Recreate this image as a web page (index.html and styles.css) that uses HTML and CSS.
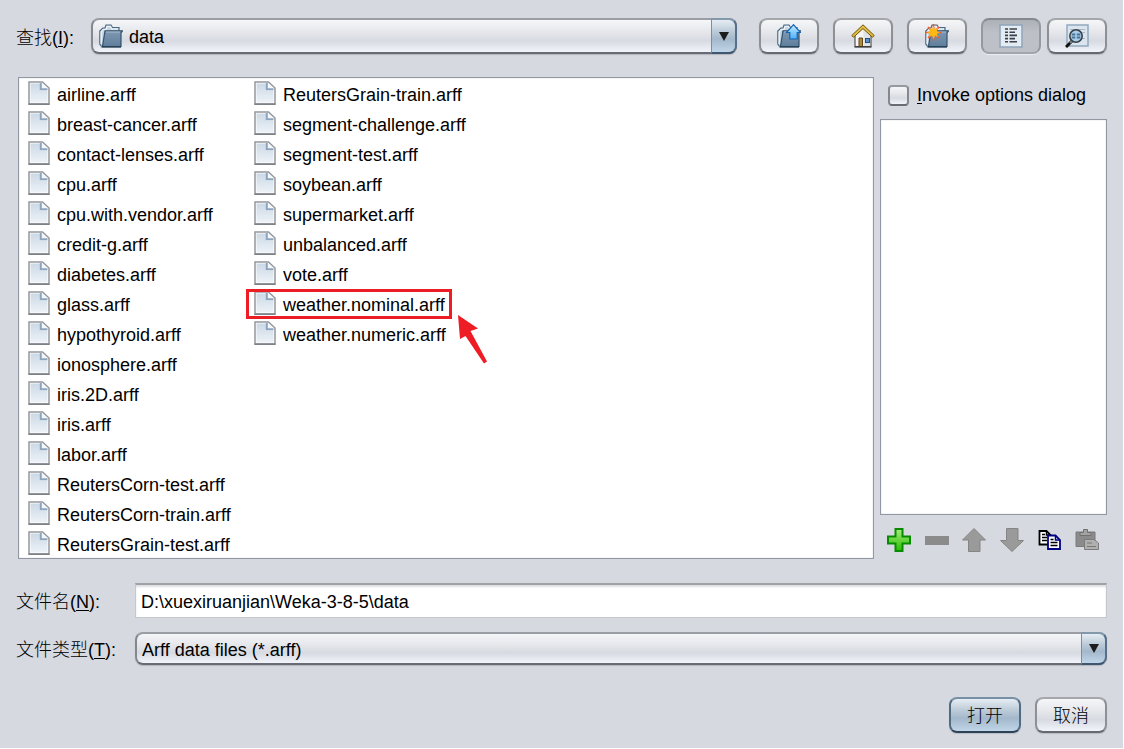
FILE: index.html
```html
<!DOCTYPE html>
<html lang="zh-CN">
<head>
    <meta charset="UTF-8">
    <meta name="viewport" content="width=device-width, initial-scale=1.0">
    <title>打开</title>
    <link rel="stylesheet" href="styles.css">
</head>
<body>
    <!-- Shared icon shapes -->
    <svg class="defs" aria-hidden="true">
        <defs>
            <linearGradient id="paper" x1="0" y1="0" x2="0" y2="1">
                <stop offset="0" stop-color="#ccd9e6"/>
                <stop offset="1" stop-color="#edf2f7"/>
            </linearGradient>
            <linearGradient id="folderFront" x1="0" y1="0" x2="0" y2="1">
                <stop offset="0" stop-color="#7f98b1"/>
                <stop offset="1" stop-color="#5f7e9c"/>
            </linearGradient>
            <linearGradient id="sky" x1="0" y1="0" x2="0" y2="1">
                <stop offset="0" stop-color="#c4eaff"/>
                <stop offset="1" stop-color="#4db0f5"/>
            </linearGradient>
            <linearGradient id="green" x1="0" y1="0" x2="0" y2="1">
                <stop offset="0" stop-color="#a8ec7c"/>
                <stop offset="1" stop-color="#27bd00"/>
            </linearGradient>
        </defs>
        <symbol id="file" viewBox="0 0 22 24">
            <path d="M1 1h13.500l6.500 6v16H1z" fill="#fff" stroke="#94979c" stroke-width="1.500"/>
            <path d="M2.500 2.500h9.500v7h7.500v12h-17z" fill="url(#paper)"/>
            <path d="M12.800 2v6.200h6.700" fill="none" stroke="#8ca4bd" stroke-width="2"/>
            <path d="M14 2l5.500 5H14z" fill="#f4f7fa"/>
            <path d="M.500 23.200h21" stroke="#7b7e82" stroke-width="1.500"/>
        </symbol>
        <symbol id="folder" viewBox="0 0 24 24">
            <path d="M2.500 22.500L.800 20V7l3-3H6l1-3h5l1.500 2.500H20V8" fill="#c9d6e1" stroke="#4b6985" stroke-width="1.200"/>
            <path d="M2.200 20V8l2-2.500H7L8 2.500h3.500L13 5h6" fill="none" stroke="#eff4f8" stroke-width="1.200"/>
            <path d="M6 6.800h17.500L22 9v13.500H3.500z" fill="url(#folderFront)" stroke="#34526e" stroke-width="1.200"/>
            <path d="M7 8h14" stroke="#a9bccd" stroke-width="1"/>
            <path d="M2.500 23h19.500" stroke="#1f394f" stroke-width="1.300"/>
        </symbol>
    </svg>

    <header class="toolbar">
        <label class="field-label" for="lookIn">查找(<u>I</u>):</label>
        <div class="combo combo-folder">
            <svg class="combo-icon" width="24" height="24"><use href="#folder"/></svg>
            <select id="lookIn">
                <option>data</option>
            </select>
            <span class="combo-arrow"></span>
        </div>
        <div class="tools">
            <button type="button" class="btn tool-btn" aria-label="Up one level">
                <svg width="24" height="24" viewBox="0 0 24 24">
                    <use href="#folder"/>
                    <path d="M16.500 .700l7 7.800h-3.300v6.500h-7.400V8.500H9.500z" fill="url(#sky)" stroke="#1266b8" stroke-width="1.200"/>
                </svg>
            </button>
            <button type="button" class="btn tool-btn" aria-label="Home">
                <svg width="24" height="24" viewBox="0 0 24 24">
                    <path d="M4 11l8-8 8 8v11.500H4z" fill="#f5f5f5" stroke="#555" stroke-width="1.200"/>
                    <path d="M12 4l7 7v11h-6z" fill="#dfe2e6"/>
                    <path d="M.800 11.500L12 .800l11.200 10.700-1.700 1.800L12 4.600l-9.500 8.700z" fill="#e0bd45" stroke="#715500" stroke-width="1"/>
                    <path d="M8 22.500v-8.500h3.500v8.500z" fill="#b18a43" stroke="#614513" stroke-width="1"/>
                    <rect x="14.500" y="14.500" width="4" height="4" fill="#5b8fc8" stroke="#284e7b"/>
                    <path d="M3.500 23h17" stroke="#333" stroke-width="1.200"/>
                </svg>
            </button>
            <button type="button" class="btn tool-btn" aria-label="New folder">
                <svg width="24" height="24" viewBox="0 0 24 24">
                    <use href="#folder"/>
                    <path d="M8.500 0v17M.500 8.500h16M3 3l11 11M14 3L3 14" stroke="#fb5a22" stroke-width="1.600"/>
                    <path d="M8.500 2l1.500 3.500 3-1.500-1.300 3.200L15 8.500l-3.300 1.300L13 13l-3-1.500-1.500 3.500L7 11.500 4 13l1.300-3.200L2 8.500l3.300-1.300L4 4l3 1.500z" fill="#ffb914"/>
                </svg>
            </button>
            <button type="button" class="btn tool-btn pressed" aria-label="List" aria-pressed="true">
                <svg width="24" height="24" viewBox="0 0 24 24">
                    <rect x="1" y="1" width="22" height="22" fill="#e3ebf3" stroke="#8fa5ba" stroke-width="1.500"/>
                    <path d="M6 5h3M6 8.200h3M6 11.400h3M6 14.600h3M6 17.800h3M10.500 5H18M10.500 8.200H16M10.500 11.400H18M10.500 14.600H16M10.500 17.800H18" stroke="#3c4147" stroke-width="1.600"/>
                </svg>
            </button>
            <button type="button" class="btn tool-btn details-btn" aria-label="Details">
                <svg width="24" height="24" viewBox="0 0 24 24">
                    <rect x="2" y="1" width="21" height="21" fill="#dae5ef" stroke="#91a9bf" stroke-width="1.500"/>
                    <path d="M5 5.500h4M11 5.500h9M16 8.500h4M17 14.500h3" stroke="#a9b5c1" stroke-width="1"/>
                    <path d="M7 17l-6 6" stroke="#111" stroke-width="3"/>
                    <path d="M7.500 16.500l-2.500 2.500" stroke="#888" stroke-width="2"/>
                    <circle cx="11" cy="12" r="6.200" fill="#a6cfec" stroke="#3a4047" stroke-width="1.600"/>
                    <path d="M6.800 10.500h3.500M11.800 10.500h3.500M6.800 13.500h3.500M11.800 13.500h3.500" stroke="#4d7191" stroke-width="1.800"/>
                </svg>
            </button>
        </div>
    </header>

    <main class="browser">
        <ul class="file-list">
            <li><svg><use href="#file"/></svg><span>airline.arff</span></li>
            <li><svg><use href="#file"/></svg><span>breast-cancer.arff</span></li>
            <li><svg><use href="#file"/></svg><span>contact-lenses.arff</span></li>
            <li><svg><use href="#file"/></svg><span>cpu.arff</span></li>
            <li><svg><use href="#file"/></svg><span>cpu.with.vendor.arff</span></li>
            <li><svg><use href="#file"/></svg><span>credit-g.arff</span></li>
            <li><svg><use href="#file"/></svg><span>diabetes.arff</span></li>
            <li><svg><use href="#file"/></svg><span>glass.arff</span></li>
            <li><svg><use href="#file"/></svg><span>hypothyroid.arff</span></li>
            <li><svg><use href="#file"/></svg><span>ionosphere.arff</span></li>
            <li><svg><use href="#file"/></svg><span>iris.2D.arff</span></li>
            <li><svg><use href="#file"/></svg><span>iris.arff</span></li>
            <li><svg><use href="#file"/></svg><span>labor.arff</span></li>
            <li><svg><use href="#file"/></svg><span>ReutersCorn-test.arff</span></li>
            <li><svg><use href="#file"/></svg><span>ReutersCorn-train.arff</span></li>
            <li><svg><use href="#file"/></svg><span>ReutersGrain-test.arff</span></li>
            <li><svg><use href="#file"/></svg><span>ReutersGrain-train.arff</span></li>
            <li><svg><use href="#file"/></svg><span>segment-challenge.arff</span></li>
            <li><svg><use href="#file"/></svg><span>segment-test.arff</span></li>
            <li><svg><use href="#file"/></svg><span>soybean.arff</span></li>
            <li><svg><use href="#file"/></svg><span>supermarket.arff</span></li>
            <li><svg><use href="#file"/></svg><span>unbalanced.arff</span></li>
            <li><svg><use href="#file"/></svg><span>vote.arff</span></li>
            <li class="marked">
                <svg><use href="#file"/></svg><span>weather.nominal.arff</span>
                <i class="marker-box"></i>
                <svg class="marker-arrow" viewBox="0 0 30 50"><path d="M0 0l20 13.500-7.500 2.500L29 46.500l-3 2L7.500 21 2 24z" fill="#ee1c25"/></svg>
            </li>
            <li><svg><use href="#file"/></svg><span>weather.numeric.arff</span></li>
        </ul>

        <aside class="side">
            <label class="check">
                <input type="checkbox">
                <span><u>I</u>nvoke options dialog</span>
            </label>
            <div class="side-box"></div>
            <div class="side-tools">
                <button type="button" aria-label="Add">
                    <svg viewBox="0 0 24 24"><path d="M8.500 1h7v7.500H23v7h-7.500V23h-7v-7.500H1v-7h7.500z" fill="url(#green)" stroke="#078b00" stroke-width="2"/></svg>
                </button>
                <button type="button" aria-label="Remove" disabled>
                    <svg viewBox="0 0 24 24"><path d="M0 8h24v9H0z" fill="#8b8b8b"/></svg>
                </button>
                <button type="button" aria-label="Move up" disabled>
                    <svg viewBox="0 0 24 24"><path d="M12 .500L23.500 12H18v11.500H6.500V12H.500z" fill="#9a9a9a" stroke="#858585"/></svg>
                </button>
                <button type="button" aria-label="Move down" disabled>
                    <svg viewBox="0 0 24 24"><path d="M12 23.500L23.500 12.500H18V.500H6.500v12H.500z" fill="#9a9a9a" stroke="#858585"/></svg>
                </button>
                <button type="button" aria-label="Copy">
                    <svg viewBox="0 0 24 24">
                        <path d="M2.500 3h7l4 4v9.500h-11z" fill="#fff" stroke="#000" stroke-width="1.800"/>
                        <path d="M9.500 3v4h4" fill="none" stroke="#000" stroke-width="1.500"/>
                        <path d="M5 6.500h3M5 9.500h5M5 12.500h5" stroke="#000" stroke-width="1.500"/>
                        <path d="M11 7.500h7.500l4.500 4.500v9H11z" fill="#fff" stroke="#000083" stroke-width="1.800"/>
                        <path d="M18.500 7.500V12H23" fill="none" stroke="#000083" stroke-width="1.500"/>
                        <path d="M13.500 11.500h3M13.500 14.500h7M13.500 17.500h7" stroke="#000" stroke-width="1.500"/>
                    </svg>
                </button>
                <button type="button" aria-label="Paste" disabled>
                    <svg viewBox="0 0 24 24">
                        <path d="M1 4h19v14.500H1z" fill="#8b8b8b" stroke="#7b7b7b"/>
                        <path d="M5 7.500V4.500h3.500v-3h4v3H16v3z" fill="#a3a3a3" stroke="#707070"/>
                        <path d="M9.500 11.500h9.500l4.500 3.500v6.500h-14z" fill="#b0b0b0" stroke="#7b7b7b"/>
                        <path d="M12 15h5M12 18.500h9" stroke="#777"/>
                    </svg>
                </button>
            </div>
        </aside>
    </main>

    <form class="fields">
        <label class="field-label" for="fileName">文件名(<u>N</u>):</label>
        <input type="text" id="fileName" value="D:\xuexiruanjian\Weka-3-8-5\data">
        <label class="field-label" for="fileType">文件类型(<u>T</u>):</label>
        <div class="combo">
            <select id="fileType">
                <option>Arff data files (*.arff)</option>
            </select>
            <span class="combo-arrow"></span>
        </div>
    </form>

    <footer class="actions">
        <button type="button" class="btn primary">打开</button>
        <button type="button" class="btn">取消</button>
    </footer>
</body>
</html>
```
FILE: styles.css
```css
:root {
    --bg: #d6d9e0;
    --line: #9297a1;
    --btn-face: linear-gradient(#f5f6f8, #e4e6ea 40%, #d7dae1 65%, #f1f4fa);
    --blue-face: linear-gradient(#e6edf3, #bccbd8 35%, #a4b8cb 60%, #c0d5e8);
}

* {
    margin: 0;
    padding: 0;
    box-sizing: border-box;
}

body {
    display: flex;
    flex-direction: column;
    min-height: 100vh;
    padding: 18px 16px 15px;
    border-right: 1px solid #fff;
    border-bottom: 1px solid #fff;
    background: var(--bg);
    color: #000;
    font: 18px/24px "Liberation Sans", Arial, "Noto Sans CJK SC", sans-serif;
}

button,
input,
select {
    font: inherit;
    color: inherit;
}

u {
    text-underline-offset: 2px;
}

.defs {
    position: absolute;
    width: 0;
    height: 0;
}

.field-label {
    padding-top: 3px;
    font-weight: 300;
    white-space: nowrap;
}

/* Top row */
.toolbar {
    display: flex;
    align-items: center;
    margin-bottom: 23px;
}

.toolbar .field-label {
    width: 75px;
}

.toolbar .combo {
    flex: 1;
}

.tools {
    display: flex;
    gap: 14px;
    margin-left: 22px;
}

.btn {
    display: flex;
    align-items: center;
    justify-content: center;
    width: 72px;
    height: 36px;
    padding-top: 2px;
    border: 2px solid;
    border-color: #a5a7ab #8e9095 #66696f;
    border-radius: 8px;
    background: var(--btn-face);
    background-clip: padding-box;
    box-shadow: 0 1px 1px #b9bcc3;
    font-weight: 300;
}

.tool-btn {
    width: 60px;
    padding-top: 0;
}

.details-btn {
    margin-left: -8px;
}

.btn.pressed {
    border-color: #85888e #95989e #a2a5ab;
    background: linear-gradient(#acb0b7, #bdc0c7 40%, #bdc0c7);
    box-shadow: 0 1px 1px #eceef1;
}

.btn.primary {
    border-color: #7890a6 #506b84 #2d4257;
    background: var(--blue-face);
}

/* Combo boxes */
.combo {
    position: relative;
    min-width: 0;
}

.combo select {
    display: block;
    width: 100%;
    height: 36px;
    padding: 2px 32px 0 5px;
    border: 2px solid;
    border-color: #9b9da4 #85888f #686b73;
    border-radius: 8px;
    background: var(--btn-face);
    box-shadow: 0 1px 1px #b3b6bd;
    appearance: none;
}

.combo-folder select {
    padding-left: 36px;
}

.combo-icon {
    position: absolute;
    left: 8px;
    top: 6px;
}

.combo-arrow {
    position: absolute;
    top: 0;
    right: 0;
    bottom: 0;
    display: flex;
    align-items: center;
    justify-content: center;
    width: 26px;
    border: 2px solid;
    border-color: #8298ab #54708a #3e566e #7890a6;
    border-left-width: 1px;
    border-radius: 0 8px 8px 0;
    background: var(--blue-face);
    pointer-events: none;
}

.combo-arrow::before {
    content: "";
    border: 5px solid transparent;
    border-top: 9px solid #1c1c1c;
    border-bottom: 0;
}

/* File list and side panel */
.browser {
    display: flex;
    flex: 1;
    gap: 6px;
    padding-left: 2px;
}

.file-list {
    display: grid;
    flex: 1;
    grid-auto-flow: column;
    grid-template-rows: repeat(16, 30px);
    grid-auto-columns: 226px;
    padding-left: 9px;
    border: 1px solid var(--line);
    box-shadow: inset 0 0 1px var(--line);
    background: #fff;
    list-style: none;
}

.file-list li {
    position: relative;
    display: flex;
    align-items: center;
    gap: 7px;
    white-space: nowrap;
}

.file-list svg {
    width: 22px;
    height: 24px;
}

.file-list span {
    padding-top: 3px;
}

.marker-box {
    position: absolute;
    top: 1px;
    left: -8px;
    width: 206px;
    height: 30px;
    border: 3px solid #ee1c25;
}

.file-list .marker-arrow {
    position: absolute;
    top: 27px;
    left: 204px;
    width: 30px;
    height: 50px;
}

.side {
    display: flex;
    flex-direction: column;
    width: 227px;
}

.check {
    display: flex;
    align-items: center;
    gap: 8px;
    height: 42px;
    padding: 0 8px 6px;
    white-space: nowrap;
}

.check input {
    width: 21px;
    height: 21px;
    border: 2px solid;
    border-color: #96999f #85888e #696c72;
    border-radius: 4px;
    background: var(--btn-face);
    appearance: none;
}

.side-box {
    flex: 1;
    border: 1px solid var(--line);
    box-shadow: inset 0 0 1px var(--line);
    background: #fff;
}

.side-tools {
    display: flex;
    align-items: flex-start;
    justify-content: space-between;
    height: 44px;
    padding: 13px 8px 0 7px;
}

.side-tools button {
    width: 24px;
    height: 24px;
    border: 0;
    background: none;
}

.side-tools svg {
    display: block;
}

/* File name and type */
.fields {
    display: grid;
    grid-template-columns: 119px 1fr;
    align-items: center;
    row-gap: 14px;
    margin-top: 24px;
}

.fields input {
    width: 100%;
    height: 35px;
    padding: 2px 5px 0;
    border: 1px solid #c5c7cc;
    border-top: 2px solid #9fa1a5;
    background: #fff;
    box-shadow: inset 0 2px 2px #dedfe2;
    outline: none;
}

.fields .combo select {
    height: 33px;
}

.actions {
    display: flex;
    justify-content: flex-end;
    gap: 14px;
    margin-top: 32px;
}
```
